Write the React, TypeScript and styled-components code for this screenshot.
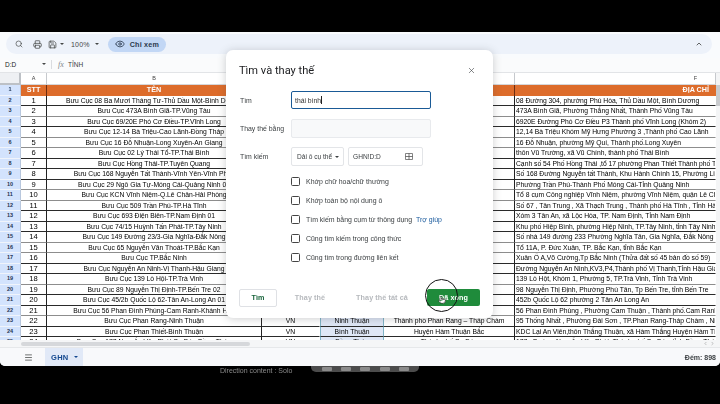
import React from 'react';
import styled, { createGlobalStyle } from 'styled-components';
import { Search, Printer, Save, Eye, ChevronUp, X, Menu, Pointer, ChevronLeft, ChevronRight } from 'lucide-react';

const Global = createGlobalStyle`
  html, body { margin: 0; padding: 0; background: #000; }
  body { width: 720px; height: 404px; overflow: hidden; font-family: "Liberation Sans", Arial, sans-serif; }
`;

const COLS = '21px 26px 215px 58px 64px 131px 201px 4px';

const Page = styled.div`
  width: 720px; height: 404px; background: #000; display: flex; flex-direction: column; position: relative; overflow: hidden;
`;
const TopBand = styled.div` height: 32px; flex: none; background: #000; `;
const Sheet = styled.div`
  height: 334px; flex: none; background: #f9fbfd; display: flex; flex-direction: column; border-radius: 0 0 5px 5px; overflow: hidden; filter: blur(0.3px);
`;
const ToolRow = styled.div` height: 26px; flex: none; padding: 2px 8px 4px 6px; box-sizing: border-box; `;
const ToolPill = styled.div`
  height: 20px; background: #edf2fa; border-radius: 10px; display: flex; align-items: center; padding-left: 9px; color: #444746;
`;
const ToolIcon = styled.span<{ $gap?: number }>`
  display: inline-flex; margin-right: ${p => p.$gap ?? 0}px; color: #444746;
`;
const Caret = styled.span<{ $gap?: number; $color?: string }>`
  width: 0; height: 0; border-left: 2.5px solid transparent; border-right: 2.5px solid transparent;
  border-top: 2.5px solid ${p => p.$color ?? '#444746'}; margin-right: ${p => p.$gap ?? 0}px; flex: none;
`;
const Zoom = styled.span` font-size: 7px; letter-spacing: 0.2px; color: #444746; margin-right: 5px; `;
const ViewPill = styled.div`
  width: 58px; height: 15px; border-radius: 8px; background: #c2d7f5; display: flex; align-items: center; gap: 5px; padding-left: 7px;
  box-sizing: border-box; font-size: 7.2px; font-weight: 700; letter-spacing: 0.2px; color: #2b3a4d;
`;
const Spacer = styled.div` flex: 1; `;
const FormulaRow = styled.div`
  height: 14px; flex: none; display: flex; align-items: center; font-size: 6.5px; color: #3c4043; padding: 0 0 2px 5px; box-sizing: border-box; background: #fafbfc;
`;
const NameBox = styled.span` width: 37px; color: #202124; `;
const Separator = styled.span` width: 1px; height: 9px; background: #dadce0; margin: 0 6px 0 5px; `;
const Fx = styled.span` font-family: "Liberation Serif", serif; font-style: italic; font-size: 8px; color: #80868b; width: 10px; margin-right: 0; `;

const Grid = styled.div` flex: 1; min-height: 0; overflow: hidden; background: #fff; border-top: 1px solid #e2e4e7; `;
const Row = styled.div<{ $h: number }>`
  display: grid; grid-template-columns: ${COLS}; height: ${p => p.$h}px; font-size: 6.75px; color: #000;
`;
const Cell = styled.div<{ $heavy?: boolean; $right?: boolean; $align?: string }>`
  box-sizing: border-box; overflow: hidden; white-space: nowrap; line-height: 9.5px;
  text-align: ${p => p.$align ?? 'center'};
  padding: 0 ${p => (p.$align === 'right' ? 6 : 1)}px;
  border-bottom: ${p => (p.$heavy ? '1.5px solid #8d8d8d' : '1px solid #2a2a2a')};
  border-right: 1px solid ${p => (p.$right ? '#222' : 'transparent')};
`;
const SttCell = styled(Cell)` font-size: 7.6px; `;
const RowHead = styled.div`
  background: #d3e3fd; color: #1f3554; font-size: 5.5px; font-weight: 700; text-align: center; line-height: 9.5px;
  border-bottom: 1px solid #f0f4fb; box-sizing: border-box; border-right: 1px solid #b8c7dd;
`;
const ColHead = styled.div<{ $align?: string }>`
  background: #fff; color: #444; font-size: 5.5px; text-align: ${p => p.$align ?? 'center'}; line-height: 11px;
  border-right: 1px solid #c6c9cd; border-bottom: 1px solid #d5d7da; box-sizing: border-box;
  padding-right: ${p => (p.$align === 'right' ? 18 : 0)}px;
`;
const Corner = styled(ColHead)` background: #eef0f3; border-right: 2px solid #bdc1c6; border-bottom: 2px solid #bdc1c6; `;
const HeadCell = styled.div<{ $align?: string; $right?: boolean }>`
  background: #dd6c2b; color: #fff; font-weight: 700; font-size: 7.2px; line-height: 10px; text-align: ${p => p.$align ?? 'center'};
  box-sizing: border-box; padding-right: ${p => (p.$align === 'right' ? 6 : 0)}px; border-right: 1px solid ${p => (p.$right ? '#6e2d10' : 'transparent')};
  overflow: hidden; white-space: nowrap;
`;
const SelCell = styled(Cell)` background: #dfe7f6; border-left: 1px solid #7fb3c6; border-right: 1px solid #7fb3c6; `;
const ScrollCell = styled.div<{ $thumb?: boolean }>` background: ${p => (p.$thumb ? '#c9cbce' : '#f4f5f6')}; `;

const ScrollRow = styled.div`
  height: 7px; flex: none; background: #f5f6f7; display: flex; align-items: center; padding-left: 21px; border-bottom: 1px solid #e6e8ea; box-sizing: content-box;
`;
const Thumb = styled.div` width: 229px; height: 4px; background: #d6d8db; border-radius: 2px; `;
const ScrollArrows = styled.div` display: flex; gap: 2px; color: #777; margin-right: 5px; `;

const TabBar = styled.div`
  height: 18px; flex: none; display: flex; align-items: stretch; padding-left: 24px; background: #f8f9fb; color: #444746;
`;
const TabMenu = styled.span` display: inline-flex; align-items: center; margin-right: 12px; `;
const Tab = styled.div`
  width: 38px; background: #e1e9f7; display: flex; align-items: center; gap: 5px; padding-left: 6px; box-sizing: border-box;
  font-size: 7.5px; font-weight: 700; letter-spacing: 0.3px; color: #12478f;
`;
const Count = styled.div` margin-left: auto; padding-right: 4px; align-self: center; font-size: 7px; font-weight: 700; color: #3c4043; `;

const BottomBand = styled.div` flex: 1; background: #000; display: flex; align-items: flex-start; padding-left: 220px; gap: 19px; overflow: hidden; `;
const Caption = styled.span` font-size: 7px; color: #8a8a8a; line-height: 8px; margin-top: 1px; white-space: nowrap; filter: blur(0.3px); `;
const Dock = styled.div` width: 108px; height: 6px; background: #4c4c4c; border-radius: 0 0 5px 5px; display: flex; justify-content: space-around; align-items: center; padding: 0 6px; box-sizing: border-box; `;
const DockDot = styled.span` width: 10px; height: 4px; background: #8b8b8b; border-radius: 1px; `;

const Dialog = styled.div`
  position: absolute; left: 226px; top: 50px; width: 267px; height: 268px; background: #fff; border-radius: 7px;
  box-shadow: 0 1px 8px rgba(60,64,67,.25); padding: 11px 13px 0 13px; box-sizing: border-box; display: flex; flex-direction: column; color: #202124; filter: blur(0.25px);
`;
const DialogHead = styled.div` display: flex; justify-content: space-between; align-items: center; height: 18px; margin-bottom: 12px; `;
const DialogTitle = styled.h2` margin: 0; font-size: 11.1px; font-weight: 400; font-family: Roboto, "Liberation Sans", sans-serif; color: #202124; `;
const CloseBtn = styled.span` display: inline-flex; color: #3c4043; margin-right: 4px; `;
const FormRow = styled.div<{ $mb: number }>` display: flex; align-items: center; margin-bottom: ${p => p.$mb}px; `;
const FieldLabel = styled.label` width: 52px; padding-left: 1px; box-sizing: border-box; font-size: 6.9px; color: #3c4043; font-weight: 500; `;
const TextBox = styled.div<{ $focus?: boolean; $h: number }>`
  width: 140px; height: ${p => p.$h}px; box-sizing: border-box; border-radius: 2px; font-size: 6.8px; display: flex; align-items: center; padding-left: 3px;
  border: ${p => (p.$focus ? '1.5px solid #1a5a96' : '1px solid #e8eaed')}; background: ${p => (p.$focus ? '#fff' : '#f8f9fa')}; color: #333;
`;
const Cursor = styled.span` width: 1px; height: 8px; background: #222; `;
const Select = styled.div`
  width: 53px; height: 19px; box-sizing: border-box; border: 1px solid #e3e5e8; border-radius: 2px; display: flex; align-items: center; gap: 3px;
  padding-left: 5px; font-size: 6.6px; color: #3c4043; margin-right: 4px; white-space: nowrap;
`;
const RangeBox = styled.div`
  width: 75px; height: 19px; box-sizing: border-box; border: 1px solid #e3e5e8; border-radius: 2px; display: flex; align-items: center; justify-content: space-between;
  padding: 0 9px 0 4px; font-size: 6.6px; font-weight: 500; color: #3c4043;
`;
const TableIcon = styled.svg` width: 8px; height: 7px; display: block; `;
const Options = styled.div` display: flex; flex-direction: column; gap: 9.2px; padding-left: 52px; margin-top: 0; `;
const Option = styled.div` display: flex; align-items: center; font-size: 6.95px; color: #3c4043; height: 10px; white-space: nowrap; `;
const Box = styled.span` width: 9px; height: 9px; box-sizing: border-box; border: 1px solid #444; border-radius: 1.5px; margin-right: 6px; flex: none; `;
const Help = styled.a` color: #17589c; margin-left: 4px; font-weight: 500; `;
const Buttons = styled.div` display: flex; align-items: center; margin-top: 26px; height: 18px; `;
const Btn = styled.button<{ $w: number; $mr: number; $kind: 'outline' | 'off' | 'primary' }>`
  width: ${p => p.$w}px; margin-right: ${p => p.$mr}px; height: ${p => (p.$kind === 'primary' ? 17 : 18)}px; padding: 0; border-radius: 2px;
  font-family: inherit; font-size: 7.2px; font-weight: 700; letter-spacing: 0.1px;
  border: ${p => (p.$kind === 'outline' ? '1px solid #dfe1e5' : 'none')};
  background: ${p => (p.$kind === 'primary' ? '#1f8b3b' : '#fff')};
  color: ${p => (p.$kind === 'primary' ? '#fff' : p.$kind === 'off' ? '#b6b9bd' : '#17633a')};
`;
const Ring = styled.div`
  position: absolute; left: 425px; top: 279px; width: 33px; height: 33px; box-sizing: border-box; border: 1px solid #111; border-radius: 50%;
  display: flex; align-items: flex-end; justify-content: center; padding: 0 0 7px 1px; color: #111;
`;

const names = [
  'Bưu Cục 08 Ba Mươi Tháng Tư-Thủ Dầu Một-Bình Dương','Bưu Cục 473A Bình Giã-TP.Vũng Tàu','Bưu Cục 69/20E Phó Cơ Điều-TP.Vĩnh Long',
  'Bưu Cục 12-14 Bà Triệu-Cao Lãnh-Đồng Tháp','Bưu Cục 16 Đỗ Nhuận-Long Xuyên-An Giang','Bưu Cục 02 Lý Thái Tổ-TP.Thái Bình',
  'Bưu Cục Hồng Thái-TP.Tuyên Quang','Bưu Cục 168 Nguyễn Tất Thành-Vĩnh Yên-Vĩnh Phúc','Bưu Cục 29 Ngô Gia Tự-Móng Cái-Quảng Ninh 01',
  'Bưu Cục KCN Vĩnh Niệm-Q.Lê Chân-Hải Phòng','Bưu Cục 509 Trần Phú-TP.Hà Tĩnh','Bưu Cục 693 Điện Biên-TP.Nam Định 01',
  'Bưu Cục 74/15 Huỳnh Tấn Phát-TP.Tây Ninh','Bưu Cục 149 Đường 23/3-Gia Nghĩa-Đắk Nông','Bưu Cục 65 Nguyễn Văn Thoát-TP.Bắc Kạn',
  'Bưu Cục TP.Bắc Ninh','Bưu Cục Nguyễn An Ninh-Vị Thanh-Hậu Giang','Bưu Cục 139 Lò Hội-TP.Trà Vinh','Bưu Cục 89 Nguyễn Thị Định-TP.Bến Tre 02',
  'Bưu Cục 45/2b Quốc Lộ 62-Tân An-Long An 01','Bưu Cục 56 Phan Đình Phùng-Cam Ranh-Khánh Hòa','Bưu Cục Phan Rang-Ninh Thuận',
  'Bưu Cục Phan Thiết-Bình Thuận','Bưu Cục 177 Nguyễn Văn Phát-Sa Đéc-Đồng Tháp',
];
const addresses = [
  '08 Đường 304, phường Phú Hòa, Thủ Dầu Một, Bình Dương','473A Bình Giã, Phường Thắng Nhất, Thành Phố Vũng Tàu','6920E Đường Phó Cơ Điều P3 Thành phố Vĩnh Long (Khóm 2)',
  '12,14 Bà Triệu Khóm Mỹ Hưng Phường 3 ,Thành phố Cao Lãnh','16 Đỗ Nhuận, phường Mỹ Quí, Thành phố.Long Xuyên','thôn Vũ Trường, xã Vũ Chính, thành phố Thái Bình',
  'Cạnh số 54 Phố Hồng Thái ,tổ 17 phường Phan Thiết Thành phố Tuyên Quang','Số 168 Đường Nguyễn tất Thành, Khu Hành Chính 15, Phường Liên Bảo','Phường Trần Phú-Thành Phố Móng Cái-Tỉnh Quảng Ninh',
  'Tổ 8 cụm Công nghiệp Vĩnh Niệm, phường Vĩnh Niệm, quận Lê Chân','Số 67 , Tân Trung , Xã Thạch Trung , Thành phố Hà Tĩnh , Tỉnh Hà Tĩnh','Xóm 3 Tân An, xã Lộc Hòa, TP. Nam Định, Tỉnh Nam Định',
  'Khu phố Hiệp Bình, phường Hiệp Ninh, TP.Tây Ninh, tỉnh Tây Ninh','Số nhà 149 đường 233 Phường Nghĩa Tân, Gia Nghĩa, Đắk Nông','Tổ 11A, P. Đức Xuân, TP. Bắc Kạn, tỉnh Bắc Kạn',
  'Xuân Ổ A,Võ Cường,Tp Bắc Ninh (Thửa đất số 45 bản đồ số 59)','Đường Nguyễn An Ninh,KV3,P4,Thành phố Vị Thanh,Tỉnh Hậu Giang','139 Lò Hột, Khóm 1, Phường 5, TP.Trà Vinh, Tỉnh Trà Vinh',
  '98 Nguyễn Thị Định, Phường Phú Tân, Tp Bến Tre, tỉnh Bến Tre','452b Quốc Lộ 62 phường 2 Tân An Long An','56 Phan Đình Phùng , Phường Cam Thuận , Thành phố.Cam Ranh',
  '95 Thống Nhất , Phường Đài Sơn , TP.Phan Rang-Tháp Chàm , Ninh Thuận','KDC Lại An Viên,thôn Thắng Thuận, xã Hàm Thắng Huyện Hàm Thuận Bắc','177 , Đường Nguyễn Văn Phát, Thành phố Sa Đéc, tỉnh Đồng Tháp',
];
const tail: Record<number, [string, string]> = {
  21: ['Ninh Thuận', 'Thành phố Phan Rang – Tháp Chàm'],
  22: ['Bình Thuận', 'Huyện Hàm Thuận Bắc'],
  23: ['Đồng Tháp', 'Thành phố Sa Đéc'],
};
const heavyRows = new Set([1, 3, 4, 8, 9, 13, 14, 17, 20]);
const options = ['Khớp chữ hoa/chữ thường', 'Khớp toàn bộ nội dung ô', 'Tìm kiếm bằng cụm từ thông dụng', 'Cũng tìm kiếm trong công thức', 'Cũng tìm trong đường liên kết'];

export default function App() {
  return (
    <Page>
      <Global />
      <TopBand />
      <Sheet>
        <ToolRow>
          <ToolPill>
            <ToolIcon $gap={10}><Search size={8} strokeWidth={2} /></ToolIcon>
            <ToolIcon $gap={6}><Printer size={9} strokeWidth={2} /></ToolIcon>
            <ToolIcon $gap={3}><Save size={9} strokeWidth={2} /></ToolIcon>
            <Caret $gap={7} />
            <Zoom>100%</Zoom>
            <Caret $gap={9} />
            <ViewPill><Eye size={10} strokeWidth={2} />Chỉ xem</ViewPill>
            <Spacer />
            <ToolIcon $gap={9}><ChevronUp size={8} strokeWidth={2.5} /></ToolIcon>
          </ToolPill>
        </ToolRow>
        <FormulaRow>
          <NameBox>D:D</NameBox>
          <Caret />
          <Separator />
          <Fx>fx</Fx>
          <span>TỈNH</span>
        </FormulaRow>
        <Grid>
          <Row $h={12}>
            <Corner />
            <ColHead>A</ColHead><ColHead>B</ColHead><ColHead /><ColHead /><ColHead />
            <ColHead $align="right">F</ColHead>
            <ScrollCell />
          </Row>
          <Row $h={10.5}>
            <RowHead>1</RowHead>
            <HeadCell $right>STT</HeadCell>
            <HeadCell $right>TÊN</HeadCell>
            <HeadCell /><HeadCell /><HeadCell $right />
            <HeadCell $align="right">ĐỊA CHỈ</HeadCell>
            <ScrollCell $thumb />
          </Row>
          {names.map((name, i) => {
            const heavy = heavyRows.has(i);
            return (
              <Row $h={10.5} key={i}>
                <RowHead>{i + 2}</RowHead>
                <SttCell $heavy={heavy} $right>{i + 1}</SttCell>
                <Cell $heavy={heavy} $right>{name}</Cell>
                <Cell $heavy={heavy}>{tail[i] ? 'VN' : ''}</Cell>
                <SelCell $heavy={heavy}>{tail[i]?.[0]}</SelCell>
                <Cell $heavy={heavy} $right>{tail[i]?.[1]}</Cell>
                <Cell $heavy={heavy} $align="left">{addresses[i]}</Cell>
                <ScrollCell $thumb={i === 0} />
              </Row>
            );
          })}
        </Grid>
        <ScrollRow>
          <Thumb />
          <Spacer />
          <ScrollArrows><ChevronLeft size={5} /><ChevronRight size={5} /></ScrollArrows>
        </ScrollRow>
        <TabBar>
          <TabMenu><Menu size={9} strokeWidth={2} /></TabMenu>
          <Tab>GHN<Caret $color="#12478f" /></Tab>
          <Count>Đếm: 898</Count>
        </TabBar>
      </Sheet>
      <BottomBand>
        <Caption>Direction content : Solo</Caption>
        <Dock><DockDot /><DockDot /><DockDot /><DockDot /><DockDot /></Dock>
      </BottomBand>

      <Dialog>
        <DialogHead>
          <DialogTitle>Tìm và thay thế</DialogTitle>
          <CloseBtn><X size={9} strokeWidth={1.6} /></CloseBtn>
        </DialogHead>
        <FormRow $mb={10}>
          <FieldLabel>Tìm</FieldLabel>
          <TextBox $focus $h={18}>thái bình<Cursor /></TextBox>
        </FormRow>
        <FormRow $mb={9}>
          <FieldLabel>Thay thế bằng</FieldLabel>
          <TextBox $h={19} />
        </FormRow>
        <FormRow $mb={10}>
          <FieldLabel>Tìm kiếm</FieldLabel>
          <Select>Dải ô cụ thể<Caret $color="#3c4043" /></Select>
          <RangeBox>
            GHN!D:D
            <TableIcon viewBox="0 0 8 7" fill="none" stroke="#555" strokeWidth="0.8">
              <rect x="0.4" y="0.4" width="7.2" height="6.2" rx="0.5" />
              <path d="M4 0.4V6.6M0.4 3.5H7.6" />
            </TableIcon>
          </RangeBox>
        </FormRow>
        <Options>
          {options.map((o, i) => (
            <Option key={o}>
              <Box />{o}{i === 2 && <Help>Trợ giúp</Help>}
            </Option>
          ))}
        </Options>
        <Buttons>
          <Btn $kind="outline" $w={38} $mr={11}>Tìm</Btn>
          <Btn $kind="off" $w={44} $mr={14}>Thay thế</Btn>
          <Btn $kind="off" $w={72} $mr={9}>Thay thế tất cả</Btn>
          <Btn $kind="primary" $w={53} $mr={0}>Đã xong</Btn>
        </Buttons>
      </Dialog>
      <Ring><Pointer size={8} fill="#fff" strokeWidth={1.5} /></Ring>
    </Page>
  );
}
